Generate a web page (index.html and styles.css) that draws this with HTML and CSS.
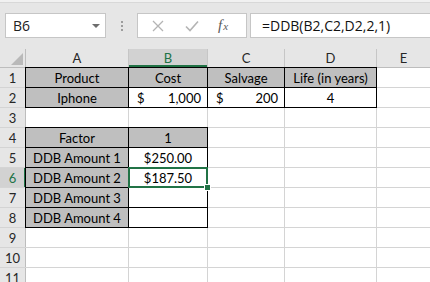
FILE: index.html
```html
<!DOCTYPE html>
<html lang="en">
<head>
    <meta charset="UTF-8">
    <meta name="viewport" content="width=device-width, initial-scale=1.0">
    <title>DDB - Excel</title>
    <link rel="stylesheet" href="styles.css">
</head>
<body>
    <div class="formula-bar">
        <div class="name-box">
            <span>B6</span>
            <svg class="name-arrow" viewBox="0 0 8 4" width="8" height="4"><polygon points="0,0 8,0 4,4" fill="#6d6d6d"/></svg>
        </div>
        <div class="grip"><i></i><i></i><i></i></div>
        <div class="fx-buttons">
            <svg class="btn-icon" viewBox="0 0 12 12" width="12" height="12"><path d="M1 1L11 11M11 1L1 11" stroke="#b4b4b4" stroke-width="1.3" fill="none"/></svg>
            <svg class="btn-icon" viewBox="0 0 14 12" width="14" height="12"><path d="M1 6.5L5 10.5L13 1.5" stroke="#b4b4b4" stroke-width="1.6" fill="none"/></svg>
            <span class="fx">f<sub>x</sub></span>
        </div>
        <div class="formula">=DDB(B2,C2,D2,2,1)</div>
    </div>

    <div class="sheet">
        <!-- column headers -->
        <div class="corner"><svg viewBox="0 0 12 12" width="12" height="12"><polygon points="12,0 12,12 0,12" fill="#b9b9b9"/></svg></div>
        <div class="hd">A</div>
        <div class="hd hd-sel">B</div>
        <div class="hd">C</div>
        <div class="hd">D</div>
        <div class="hd">E</div>

        <div class="rh">1</div>
        <div class="c fill bd">Product</div>
        <div class="c fill bd">Cost</div>
        <div class="c fill bd">Salvage</div>
        <div class="c fill bd">Life (in years)</div>
        <div class="c"></div>

        <div class="rh">2</div>
        <div class="c fill bd">Iphone</div>
        <div class="c bd acct"><span>$</span><span>1,000</span></div>
        <div class="c bd acct"><span>$</span><span>200</span></div>
        <div class="c bd">4</div>
        <div class="c"></div>

        <div class="rh">3</div>
        <div class="c"></div>
        <div class="c"></div>
        <div class="c"></div>
        <div class="c"></div>
        <div class="c"></div>

        <div class="rh">4</div>
        <div class="c fill bd">Factor</div>
        <div class="c fill bd">1</div>
        <div class="c"></div>
        <div class="c"></div>
        <div class="c"></div>

        <div class="rh">5</div>
        <div class="c fill bd">DDB Amount 1</div>
        <div class="c bd">$250.00</div>
        <div class="c"></div>
        <div class="c"></div>
        <div class="c"></div>

        <div class="rh rh-sel">6</div>
        <div class="c fill bd">DDB Amount 2</div>
        <div class="c bd active">$187.50</div>
        <div class="c"></div>
        <div class="c"></div>
        <div class="c"></div>

        <div class="rh">7</div>
        <div class="c fill bd">DDB Amount 3</div>
        <div class="c bd"></div>
        <div class="c"></div>
        <div class="c"></div>
        <div class="c"></div>

        <div class="rh">8</div>
        <div class="c fill bd">DDB Amount 4</div>
        <div class="c bd"></div>
        <div class="c"></div>
        <div class="c"></div>
        <div class="c"></div>

        <div class="rh">9</div>
        <div class="c"></div>
        <div class="c"></div>
        <div class="c"></div>
        <div class="c"></div>
        <div class="c"></div>

        <div class="rh">10</div>
        <div class="c"></div>
        <div class="c"></div>
        <div class="c"></div>
        <div class="c"></div>
        <div class="c"></div>

        <div class="rh">11</div>
        <div class="c"></div>
        <div class="c"></div>
        <div class="c"></div>
        <div class="c"></div>
        <div class="c"></div>
    </div>
</body>
</html>
```

FILE: styles.css
```css
body {
    margin: 0;
    padding: 0;
    width: 430px;
    height: 282px;
    overflow: hidden;
    background-color: #e6e6e6;
    font-family: "Lato", "Liberation Sans", sans-serif;
    color: #000;
}
.formula-bar {
    border-top: 2px solid #f1f1f1;
    box-shadow: inset 0 1px 0 #d8d8d8;
    display: flex;
    align-items: flex-start;
    padding: 11px 0 0 5px;
    box-sizing: border-box;
    height: 49px;
    font-family: "Open Sans", "Noto Sans", sans-serif;
}
.name-box {
    width: 101px;
    height: 25px;
    box-sizing: border-box;
    background: white;
    border: 1px solid #c6c6c6;
    display: flex;
    align-items: center;
    justify-content: space-between;
    padding: 0 5px 0 7px;
    font-size: 14px;
    color: #222;
}
.name-arrow {
    margin-top: 1px;
}
.grip {
    width: 31px;
    height: 25px;
    display: flex;
    flex-direction: column;
    align-items: center;
    justify-content: center;
    gap: 2px;
}
.grip i {
    display: block;
    width: 2px;
    height: 2px;
    background: #9d9d9d;
}
.fx-buttons {
    width: 110px;
    height: 25px;
    box-sizing: border-box;
    background: white;
    border: 1px solid #c6c6c6;
    display: flex;
    align-items: center;
    padding-left: 14px;
    gap: 21px;
}
.fx {
    font-family: "Liberation Serif", serif;
    font-style: italic;
    font-size: 15px;
    color: #5a5a5a;
    margin-left: -2px;
}
.fx sub {
    font-size: 11px;
    vertical-align: 0;
    margin-left: 1px;
}
.formula {
    flex: 1;
    margin-left: 3px;
    height: 25px;
    box-sizing: border-box;
    background: white;
    border: 1px solid #c6c6c6;
    border-right: none;
    padding-left: 11px;
    font-size: 14px;
    line-height: 23px;
    color: #111;
}
.sheet {
    display: grid;
    grid-template-columns: 25px 102px 78px 76px 91px 1fr;
    grid-template-rows: 18px repeat(11, 19px);
    gap: 1px;
    background-color: #d4d4d4;
    font-size: 13px;
}
.corner {
    background: #e6e6e6;
    display: flex;
    align-items: flex-end;
    justify-content: flex-end;
    padding: 0 2px 2px 0;
    box-shadow: 1px 0 0 #bdbdbd, 0 1px 0 #bdbdbd;
}
.hd {
    background: #e6e6e6;
    color: #262626;
    text-align: center;
    line-height: 19px;
    box-shadow: 1px 0 0 #c6c6c6, 0 1px 0 #bdbdbd;
}
.hd-sel {
    background: #d2d2d2;
    color: #217346;
    box-shadow: inset 0 -2px 0 #217346, 1px 0 0 #c6c6c6, 0 1px 0 #217346;
}
.rh {
    background: #e6e6e6;
    color: #262626;
    text-align: center;
    line-height: 20px;
    box-shadow: 1px 0 0 #bdbdbd;
}
.rh-sel {
    background: #d2d2d2;
    color: #217346;
    box-shadow: inset -1px 0 0 #217346, 1px 0 0 #217346;
}
.c {
    background: white;
    display: flex;
    align-items: flex-end;
    justify-content: center;
    line-height: 18px;
    white-space: nowrap;
}
.fill {
    background: #bfbfbf;
}
.bd {
    box-shadow: 0 0 0 1px #000;
}
.acct {
    justify-content: space-between;
    padding: 0 6px 0 8px;
}
.active {
    position: relative;
    z-index: 1;
    box-shadow: 0 0 0 1px #217346, inset 0 0 0 1px #217346;
}
.active::after {
    content: "";
    position: absolute;
    right: -4px;
    bottom: -4px;
    width: 5px;
    height: 5px;
    background: #217346;
    border: 1px solid white;
}
```
